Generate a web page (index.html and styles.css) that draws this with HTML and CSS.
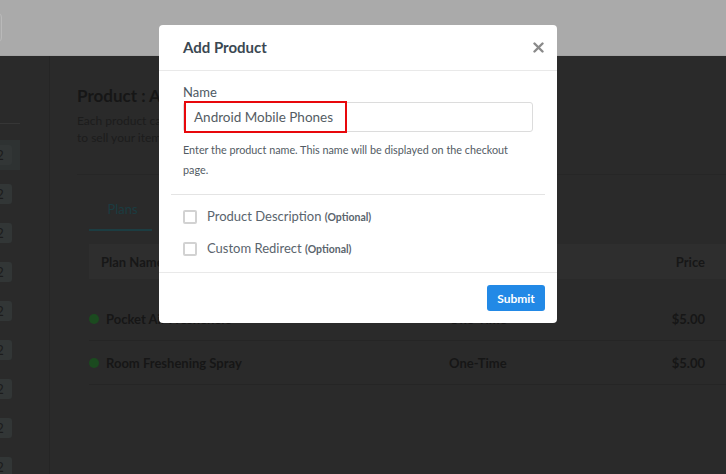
FILE: index.html
```html
<!DOCTYPE html>
<html>
<head>
<meta charset="utf-8">
<link rel="stylesheet" href="styles.css">
</head>
<body>
<div class="topbar"><div class="topbtn"></div></div>
<div class="layout">
  <aside class="sidebar">
    <div class="side-line"></div>
    <div class="side-item active"><span class="badge">2</span></div>
    <div class="side-item"><span class="badge">2</span></div>
    <div class="side-item"><span class="badge">2</span></div>
    <div class="side-item"><span class="badge">2</span></div>
    <div class="side-item"><span class="badge">2</span></div>
    <div class="side-item"><span class="badge">2</span></div>
    <div class="side-item"><span class="badge">2</span></div>
    <div class="side-item"><span class="badge">2</span></div>
    <div class="side-item"><span class="badge">2</span></div>
  </aside>
  <main class="main">
    <h1 class="title">Product : Android Mobile Phones</h1>
    <p class="desc">Each product can have multiple plans. Use plans when you want<br>to sell your items at different prices.</p>
    <div class="card">
      <div class="tabs"><div class="tab">Plans</div></div>
      <div class="thead"><span class="c-name">Plan Name</span><span class="c-type">Type</span><span class="c-price">Price</span></div>
      <div class="row"><span class="c-name"><i class="dot"></i>Pocket Air Fresheners</span><span class="c-type">One-Time</span><span class="c-price">$5.00</span></div>
      <div class="row"><span class="c-name"><i class="dot"></i>Room Freshening Spray</span><span class="c-type">One-Time</span><span class="c-price">$5.00</span></div>
    </div>
  </main>
</div>

<div class="modal">
  <div class="m-head">
    <span class="m-title">Add Product</span>
    <svg class="m-close" width="11" height="11" viewBox="0 0 11 11"><path d="M1.5 1.5 L9.5 9.5 M9.5 1.5 L1.5 9.5" stroke="#8a8a8a" stroke-width="2.4" stroke-linecap="round"/></svg>
  </div>
  <div class="m-body">
    <div class="label">Name</div>
    <div class="input"><span class="value">Android Mobile Phones</span><span class="hl"></span></div>
    <p class="help">Enter the product name. This name will be displayed on the checkout<br>page.</p>
    <div class="sep"></div>
    <div class="opt first"><span class="cb"></span><span class="opt-t">Product Description <small>(Optional)</small></span></div>
    <div class="opt"><span class="cb"></span><span class="opt-t">Custom Redirect <small>(Optional)</small></span></div>
  </div>
  <div class="m-foot"><button class="submit">Submit</button></div>
</div>
</body>
</html>
```
FILE: styles.css
```css
* { box-sizing: border-box; }
html, body { margin: 0; padding: 0; }
body {
  width: 726px;
  height: 474px;
  overflow: hidden;
  background: #2a2a2a;
  font-family: Lato, "Open Sans", sans-serif;
  position: relative;
}
.topbar {
  height: 56px;
  background: #aaaaaa;
  padding-top: 13px;
  border-bottom: 1px solid #a3a3a3;
}
.topbtn {
  width: 62px;
  height: 29px;
  margin-left: -60px;
  border: 1px solid #b9b9b9;
  border-radius: 4px;
}
.layout {
  display: flex;
  height: 418px;
}
.sidebar {
  width: 50px;
  border-right: 1px solid #252525;
  padding-top: 67px;
  flex: none;
}
.side-line {
  width: 20px;
  height: 1px;
  background: #363636;
  margin-bottom: 16px;
}
.side-item {
  width: 20px;
  height: 30px;
  margin-bottom: 9px;
  display: flex;
  align-items: center;
  overflow: hidden;
}
.side-item.active { background: #2e3232; }
.badge {
  flex: none;
  width: 24px;
  height: 20px;
  margin-left: -12px;
  background: #323636;
  border-radius: 3px;
  color: #1c1c1c;
  font-size: 13px;
  line-height: 20px;
  text-align: center;
}
.main {
  flex: 1;
  padding: 30px 0 0 27px;
  min-width: 0;
}
.title {
  margin: 0;
  font-size: 17px;
  line-height: 20px;
  font-weight: 700;
  color: #161616;
  white-space: nowrap;
}
.desc {
  margin: 6px 0 0;
  font-size: 12px;
  line-height: 17px;
  color: #1c1c1c;
  white-space: nowrap;
}
.card {
  margin-top: 28px;
  border-top: 1px solid #262626;
  padding-left: 12px;
}
.tabs {
  padding-top: 25px;
  display: flex;
}
.tab {
  width: 63px;
  text-align: center;
  padding-left: 4px;
  font-size: 13px;
  line-height: 18px;
  color: #1b3c41;
  padding-bottom: 11px;
  border-bottom: 2px solid #1c3d42;
}
.thead {
  margin-top: 13px;
  height: 35px;
  background: #2e2e2e;
  display: flex;
  align-items: center;
  font-size: 13px;
  font-weight: 700;
  color: #171717;
  margin-bottom: 18px;
}
.thead .c-name { padding-left: 12px; }
.c-name { width: 360px; flex: none; }
.c-type { width: 196px; flex: none; }
.c-price { width: 60px; flex: none; text-align: right; }
.row {
  height: 44px;
  display: flex;
  align-items: center;
  border-bottom: 1px solid #252525;
  font-size: 13px;
  font-weight: 700;
  color: #161616;
}
.row .c-name { display: flex; align-items: center; }
.dot {
  width: 10px;
  height: 10px;
  border-radius: 50%;
  background: #1b4a1f;
  margin-right: 7px;
}
.modal {
  position: absolute;
  left: 159px;
  top: 25px;
  width: 398px;
  height: 298px;
  background: #fff;
  border-radius: 4px;
}
.m-head {
  height: 46px;
  padding: 0 13px 0 24px;
  display: flex;
  align-items: center;
  justify-content: space-between;
  border-bottom: 1px solid #e9e9e9;
}
.m-title {
  font-size: 15px;
  font-weight: 700;
  color: #3b4852;
  margin-top: -2px;
}
.m-body {
  height: 201px;
  padding: 13px 24px 0;
}
.label {
  font-size: 13px;
  line-height: 16px;
  color: #4d5963;
}
.input {
  position: relative;
  margin-top: 2px;
  width: 350px;
  height: 30px;
  border: 1px solid #dcdcdc;
  border-radius: 3px;
  display: flex;
  align-items: center;
  padding-left: 10px;
}
.value {
  font-size: 13.5px;
  color: #545c63;
}
.hl {
  position: absolute;
  left: 0;
  top: -2px;
  width: 163px;
  height: 32px;
  border: 2px solid #e8080c;
}
.help {
  margin: 8px 0 0;
  font-size: 10.8px;
  line-height: 20px;
  color: #525b63;
}
.sep {
  margin: 14px -12px 0;
  height: 1px;
  background: #e4e4e4;
}
.opt {
  display: flex;
  align-items: center;
  height: 32px;
}
.opt.first { margin-top: 5px; }
.cb {
  width: 14px;
  height: 14px;
  border: 2px solid #d2d2d2;
  border-radius: 2px;
  margin-right: 10px;
  margin-top: 2px;
  flex: none;
}
.opt-t {
  font-size: 13px;
  color: #5a646d;
}
.opt-t small {
  font-size: 10.5px;
  font-weight: 700;
}
.m-foot {
  border-top: 1px solid #e9e9e9;
  display: flex;
  justify-content: flex-end;
  padding: 12px 12px 0;
}
.submit {
  width: 58px;
  height: 26px;
  border: none;
  border-radius: 3px;
  background: #2289e6;
  color: #fff;
  font-family: Lato, sans-serif;
  font-size: 12px;
  font-weight: 700;
  padding: 0;
}
```
